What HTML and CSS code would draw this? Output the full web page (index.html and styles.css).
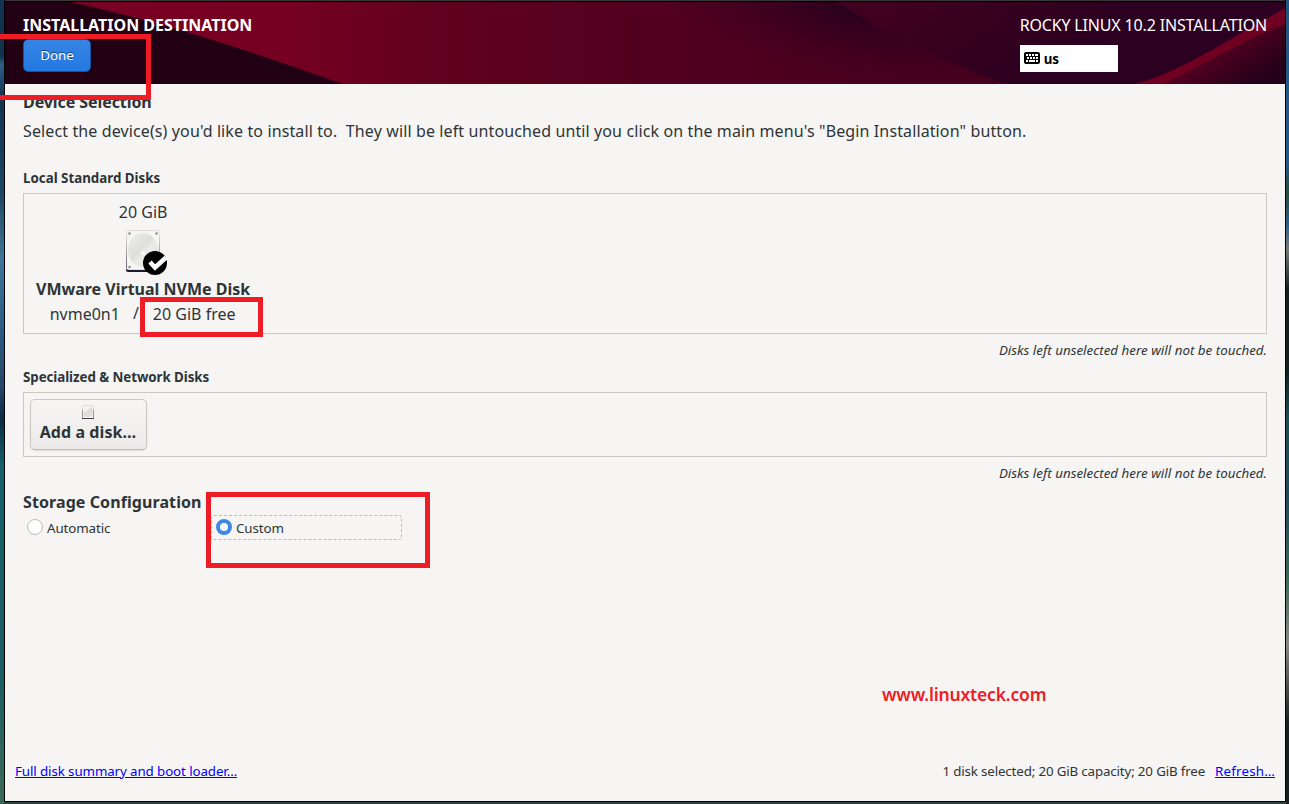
FILE: index.html
```html
<!DOCTYPE html>
<html lang="en">
<head>
  <meta charset="utf-8">
  <title>Installation Destination</title>
  <link rel="stylesheet" href="styles.css">
</head>
<body>
  <div class="window">
    <header class="header">
      <!-- banner artwork -->
      <svg class="banner" viewBox="0 0 1280 82" preserveAspectRatio="none">
        <defs>
          <linearGradient id="red" x1="0" y1="0" x2="1" y2="0">
            <stop offset="0" stop-color="#7a0024"/>
            <stop offset=".22" stop-color="#760021"/>
            <stop offset=".33" stop-color="#620020"/>
            <stop offset=".5" stop-color="#52001f"/>
            <stop offset=".7" stop-color="#47001d"/>
            <stop offset="1" stop-color="#41001d"/>
          </linearGradient>
          <radialGradient id="plum" gradientUnits="userSpaceOnUse" cx="0" cy="0" r="1" gradientTransform="matrix(200 40 -30 62 850 8)">
            <stop offset="0" stop-color="#28001f"/>
            <stop offset="1" stop-color="#3c001f" stop-opacity="0"/>
          </radialGradient>
          <linearGradient id="wave" gradientUnits="userSpaceOnUse" x1="900" y1="0" x2="980" y2="110">
            <stop offset="0" stop-color="#40001f"/>
            <stop offset="1" stop-color="#2c0020"/>
          </linearGradient>
          <linearGradient id="corner" gradientUnits="userSpaceOnUse" x1="1215" y1="50" x2="1238" y2="86">
            <stop offset="0" stop-color="#50001f"/>
            <stop offset="1" stop-color="#26001a"/>
          </linearGradient>
        </defs>
        <rect width="1280" height="82" fill="url(#red)"/>
        <path d="M0 0H65C150 18 230 44 338 82H0Z" fill="#210014"/>
        <rect x="600" width="500" height="82" fill="url(#plum)"/>
        <path d="M832 0C880 32 940 60 1000 82H1280V0Z" fill="url(#wave)"/>
        <path d="M1130 82C1180 70 1230 36 1280 8V82Z" fill="url(#corner)"/>
        <path d="M1130 82C1170 72 1220 40 1280 6V22C1235 39 1190 68 1158 82Z" fill="#700022"/>
      </svg>
      <div class="header-left">
        <div class="title">INSTALLATION DESTINATION</div>
        <button class="done-btn">Done</button>
      </div>
      <div class="header-right">
        <div class="product">ROCKY LINUX 10.2 INSTALLATION</div>
        <div class="keyboard">
          <svg width="16" height="12" viewBox="0 0 16 12">
            <rect width="16" height="12" rx="2" fill="#000"/>
            <path d="M2 3h2M5 3h2M8 3h2M11 3h3M3 6h2M6 6h2M9 6h2M12 6h2M2 9h2M5 9h6M12 9h2" stroke="#fff" stroke-width="2"/>
          </svg>
          <span>us</span>
        </div>
      </div>
    </header>

    <main class="content">
      <h2 class="heading device-title">Device Selection</h2>
      <p class="intro">Select the device(s) you'd like to install to.&nbsp; They will be left untouched until you click on the main menu's "Begin Installation" button.</p>

      <h3 class="subheading">Local Standard Disks</h3>
      <div class="disk-box local">
        <div class="disk">
          <div class="disk-size">20 GiB</div>
          <svg class="disk-icon" width="42" height="46" viewBox="0 0 42 46">
            <defs>
              <linearGradient id="platter" x1="0" y1="0" x2="1" y2="1">
                <stop offset="0" stop-color="#f4f4f3"/>
                <stop offset=".15" stop-color="#e9e9e7"/>
                <stop offset=".45" stop-color="#dededb"/>
                <stop offset=".6" stop-color="#ebebe9"/>
                <stop offset="1" stop-color="#d4d4d0"/>
              </linearGradient>
              <linearGradient id="side" x1="0" y1="0" x2="0" y2="1">
                <stop offset="0" stop-color="#dcdcda"/>
                <stop offset="1" stop-color="#66666c"/>
              </linearGradient>
            </defs>
            <path d="M0 36h34v4q0 2-2 2H2q-2 0-2-2Z" fill="#1b1830"/>
            <rect x=".5" y=".5" width="33" height="39" rx="2" fill="#f5f5f4" stroke="#dededc"/>
            <path d="M0 6h1V38H0ZM33 6h1V38H33Z" fill="url(#side)"/>
            <ellipse cx="17" cy="20" rx="15" ry="17" fill="url(#platter)"/>
            <circle cx="17" cy="23" r="2" fill="#f8f8f7"/>
            <circle cx="3.500" cy="3.500" r="1.200" fill="#888"/>
            <circle cx="30.500" cy="3.500" r="1.200" fill="#888"/>
            <circle cx="3.500" cy="37" r="1.200" fill="#888"/>
            <circle cx="29" cy="33" r="12" fill="#000"/>
            <path d="M24 32l5 5.500L40 27.500" fill="none" stroke="#fff" stroke-width="4.500"/>
          </svg>
          <div class="disk-name">VMware Virtual NVMe Disk</div>
          <div class="disk-info">
            <span>nvme0n1</span>
            <span class="slash">/</span>
            <span>20 GiB free</span>
          </div>
        </div>
      </div>
      <div class="note">Disks left unselected here will not be touched.</div>

      <h3 class="subheading network-title">Specialized &amp; Network Disks</h3>
      <div class="disk-box network">
        <button class="add-btn">
          <svg width="12" height="14" viewBox="0 0 12 14">
            <rect x=".5" y=".5" width="11" height="13" rx="1" fill="#f3f3f2" stroke="#dadad8"/>
            <path d="M1 9L9 2L10.500 4V10L8 12H2Z" fill="#dededb"/>
            <path d="M.5 5V13M11.500 5V13" stroke="#9a9a98"/>
            <path d="M0 13.500H12" stroke="#444"/>
          </svg>
          <span>Add a disk…</span>
        </button>
      </div>
      <div class="note">Disks left unselected here will not be touched.</div>

      <h2 class="heading storage-title">Storage Configuration</h2>
      <div class="options">
        <label class="option"><span class="radio"></span>Automatic</label>
        <label class="option focused"><span class="radio checked"></span>Custom</label>
      </div>
    </main>

    <footer class="footer">
      <a class="link" href="#">Full disk summary and boot loader…</a>
      <span class="summary">1 disk selected; 20 GiB capacity; 20 GiB free</span>
      <a class="link refresh" href="#">Refresh…</a>
    </footer>
  </div>

  <!-- annotations over the window -->
  <div class="mark mark-done"></div>
  <div class="mark mark-free"></div>
  <div class="mark mark-custom"></div>
  <div class="watermark">www.linuxteck.com</div>
</body>
</html>
```
FILE: styles.css
```css
* {
  box-sizing: border-box;
}

body {
  position: relative;
  width: 1289px;
  height: 804px;
  margin: 0;
  padding: 0 3px 2px 4px;
  overflow: hidden;
  font-family: "Noto Sans", sans-serif;
  font-size: 13.33px;
  color: #2e3436;
  background:
    linear-gradient(#123352 0, #12304c 7%, #2f6089 8%, #123352 12%, #1d4663 24%, #3f7596 32%, #2d5f86 40%, #27466b 48%, #0c2b42 52%, #14606a 58%, #1d5f62 85%, #3c6a58 100%) left / 4px 100% no-repeat,
    linear-gradient(#24557f 0, #24598a 20%, #2b4b3e 24%, #2f6089 28%, #777b78 31%, #10201f 36%, #10201f 46%, #1d4f55 52%, #24485e 62%, #3c6a58 72%, #8a8a84 80%, #191f20 90%) right / 3px 100% no-repeat,
    #2c453f;
}

.window {
  display: flex;
  flex-direction: column;
  height: 802px;
  border: 1px solid #000;
  border-top: 0;
  background-color: #f6f5f4;
}

.header {
  position: relative;
  display: flex;
  justify-content: space-between;
  height: 84px;
  padding: 12px 18px 0;
  border-top: 2px solid #000;
  color: #fff;
  font-size: 16px;
  line-height: 22px;
  box-shadow: inset -1px 0 #4a3440;
}

/* light hairline along the top edge of the frame */
.header::before {
  content: '';
  position: absolute;
  top: -2px;
  left: 0;
  width: 100%;
  height: 1px;
  background-color: #383838;
}

.banner {
  position: absolute;
  top: 0;
  left: 0;
  width: 100%;
  height: 100%;
}

.header-left,
.header-right {
  position: relative;
}

.title {
  font-weight: bold;
}

.product {
  letter-spacing: -0.16px;
}

.done-btn {
  display: block;
  width: 68px;
  height: 33px;
  margin-top: 3px;
  padding: 0 0 2px;
  border: 1px solid #15539e;
  border-radius: 5px;
  color: #fff;
  font-family: inherit;
  font-size: 13.33px;
  text-shadow: 0 -1px rgba(0, 0, 0, 0.5);
  background: linear-gradient(#3584e4, #2379e2);
}

.keyboard {
  display: flex;
  align-items: center;
  gap: 4px;
  width: 98px;
  height: 27px;
  margin-top: 9px;
  padding-left: 4px;
  color: #000;
  font-size: 13.33px;
  font-weight: bold;
  background-color: #fff;
}

.keyboard svg {
  margin-top: -1px;
}

.content {
  flex: 1;
  padding: 7px 18px 0;
}

.heading {
  margin: 0;
  font-size: 16px;
  line-height: 22px;
}

.device-title {
  letter-spacing: -0.08px;
}

.intro {
  margin: 7px 0 0;
  font-size: 16px;
  line-height: 22px;
  letter-spacing: 0.117px;
}

.subheading {
  margin: 27px 0 0;
  font-size: 13.33px;
  line-height: 18px;
}

.disk-box {
  display: flex;
  border: 1px solid #cdc7c2;
}

.local {
  height: 141px;
  margin-top: 6px;
  padding: 7px 12px;
}

.disk {
  display: flex;
  flex-direction: column;
  align-items: center;
  font-size: 16px;
  line-height: 22px;
}

.disk-icon {
  margin: 7px 0 2px 7px;
}

.disk-name {
  font-weight: bold;
}

.disk-info {
  display: flex;
  margin: 3px 1px 0 0;
}

.slash {
  margin: -1px 14px 0 13px;
}

.note {
  margin-top: 7px;
  font-style: italic;
  line-height: 18px;
  text-align: right;
  letter-spacing: 0.015px;
}

.network-title {
  margin-top: 9px;
  letter-spacing: -0.06px;
}

.network {
  height: 65px;
  margin-top: 6px;
  padding: 6px;
}

.add-btn {
  display: flex;
  flex-direction: column;
  align-items: center;
  width: 117px;
  height: 51px;
  padding: 5px 1px 0 0;
  border: 1px solid #cdc7c2;
  border-bottom-color: #bfb8b1;
  border-radius: 5px;
  color: #2e3436;
  font-family: inherit;
  font-size: 16px;
  font-weight: bold;
  line-height: 22px;
  letter-spacing: 0.08px;
  background: linear-gradient(#f6f5f4, #edebe9);
  box-shadow: 0 1px 2px rgba(0, 0, 0, 0.1);
}

.add-btn span {
  margin-top: 2px;
}

.storage-title {
  margin-top: 9px;
  letter-spacing: 0.09px;
}

.options {
  display: flex;
  margin-top: 2px;
  letter-spacing: -0.1px;
}

.option {
  display: flex;
  align-items: center;
  gap: 4px;
  width: 188px;
  height: 25px;
  padding-left: 4px;
}

.focused {
  width: 191px;
  padding-left: 4px;
  border: 1px dashed #bcbcba;
  border-radius: 3px;
}

.radio {
  width: 16px;
  height: 16px;
  margin-top: -1px;
  border: 1px solid #c0bab4;
  border-radius: 50%;
  background-color: #fff;
}

.radio.checked {
  border: 4px solid #3d89e5;
}

.footer {
  display: flex;
  align-items: center;
  height: 39px;
  padding: 0 10px 22px;
  line-height: 18px;
  letter-spacing: -0.1px;
}

.summary {
  margin: 0 10px 0 auto;
  letter-spacing: -0.15px;
}

.link {
  color: #00f;
}

.refresh {
  letter-spacing: 0.2px;
}

.mark {
  position: absolute;
  border: 5px solid #ee1c25;
}

.mark-done {
  top: 34px;
  left: -5px;
  width: 156px;
  height: 66px;
}

.mark-free {
  top: 297px;
  left: 140px;
  width: 123px;
  height: 40px;
}

.mark-custom {
  top: 492px;
  left: 206px;
  width: 224px;
  height: 76px;
}

.watermark {
  position: absolute;
  top: 682px;
  left: 882px;
  color: #ee1c25;
  font-size: 17.5px;
  font-weight: 600;
  line-height: 24px;
  letter-spacing: -0.18px;
}
```
